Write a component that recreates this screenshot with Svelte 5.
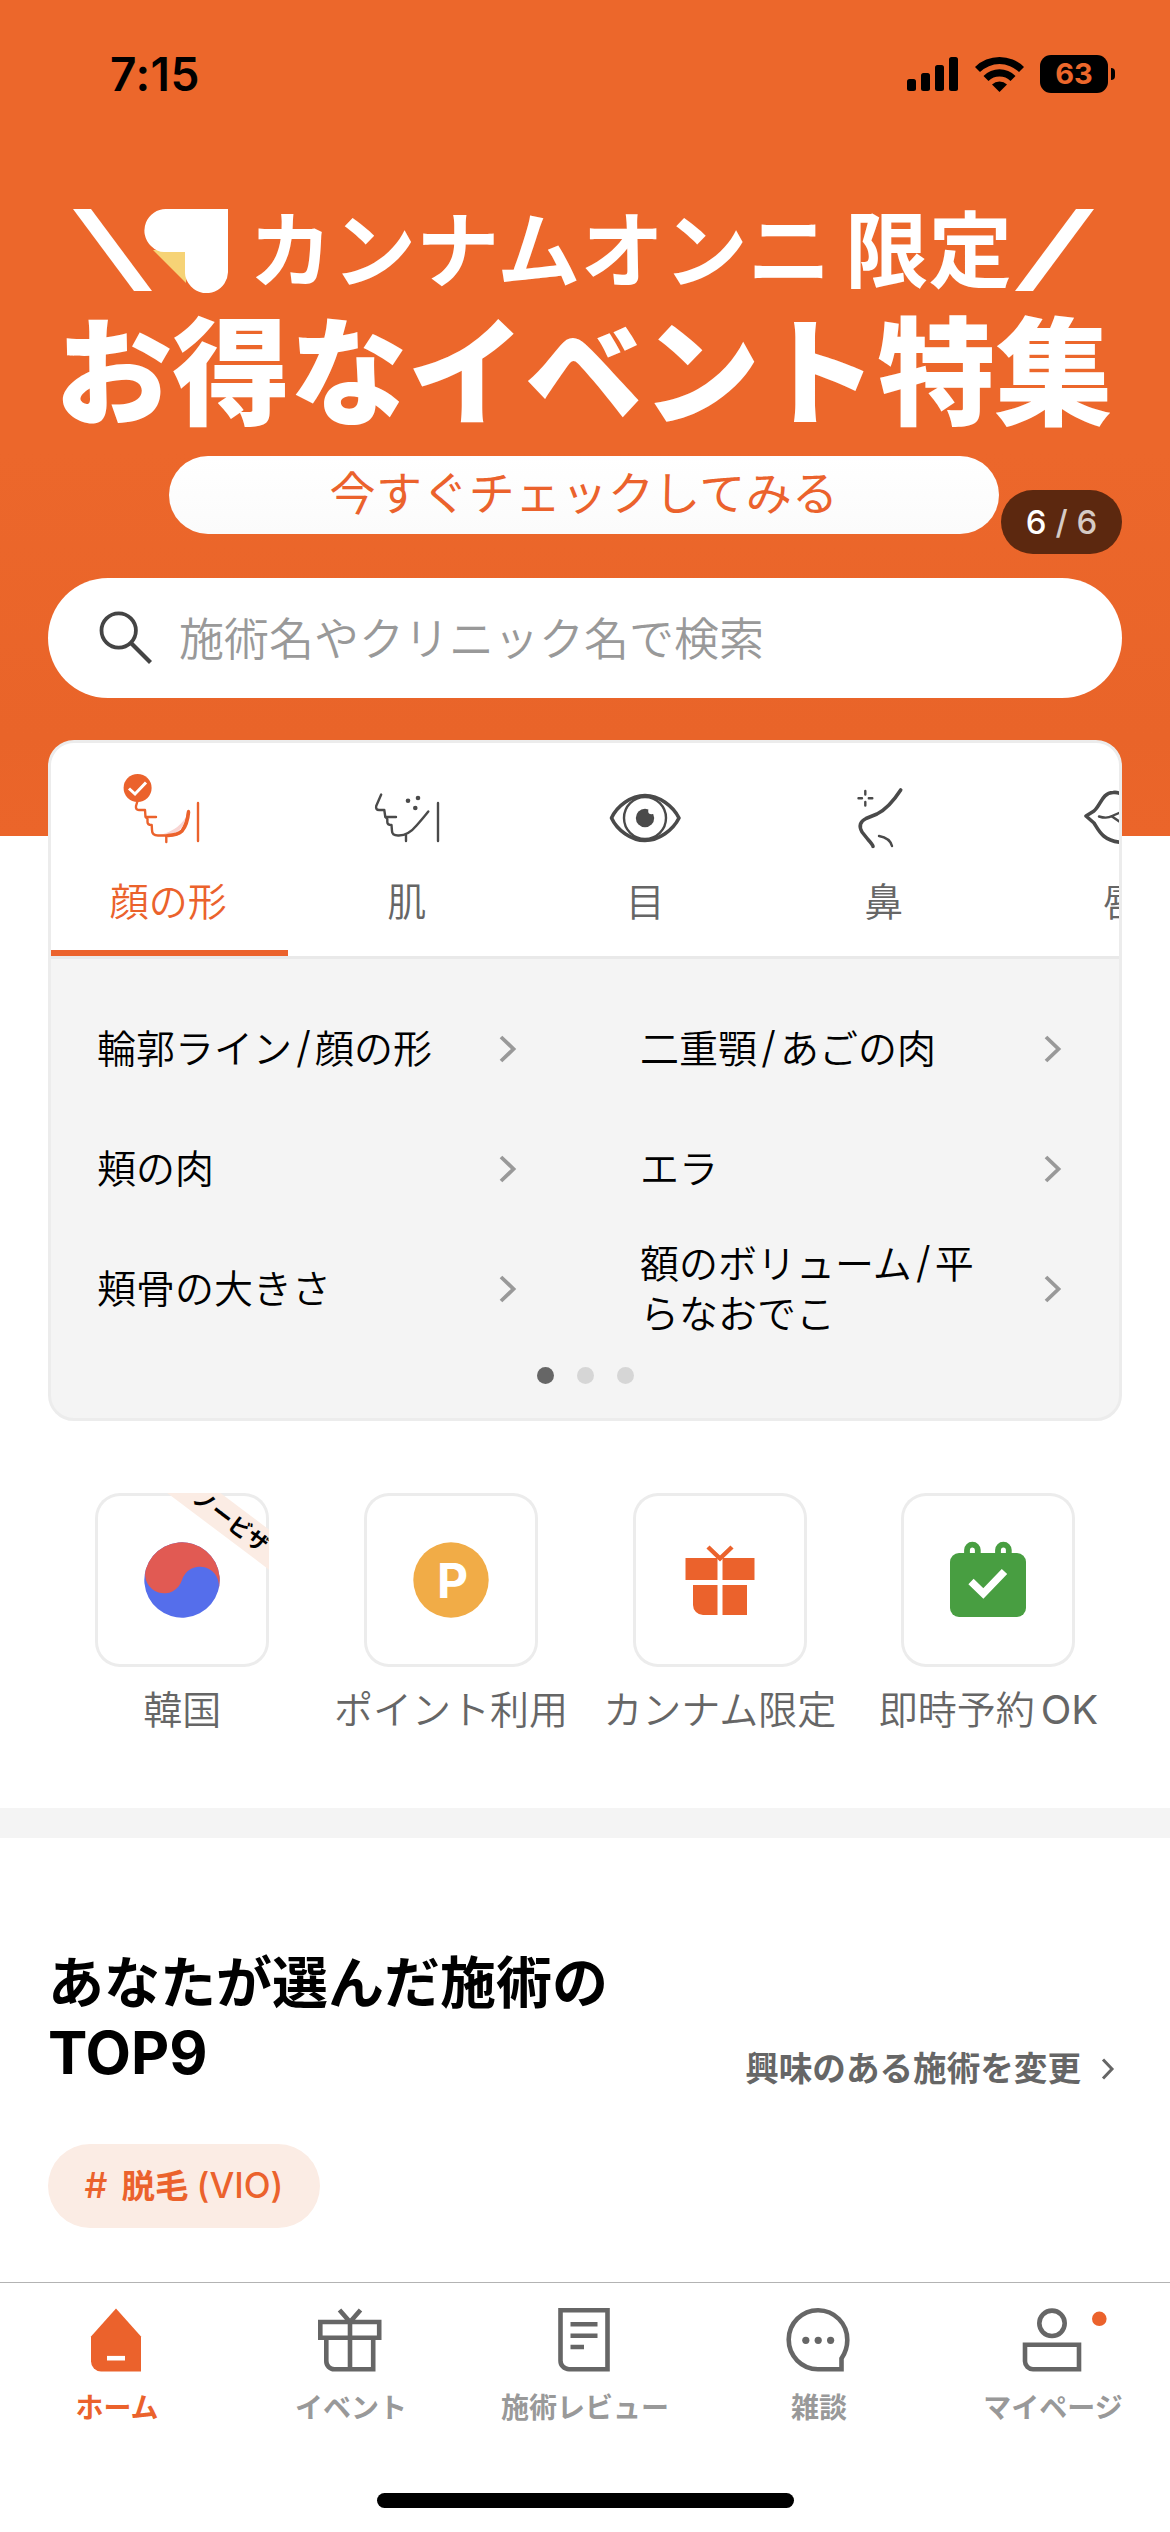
<script>
    const tabs = [
        { id: 'face', label: '顔の形' },
        { id: 'skin', label: '肌' },
        { id: 'eye', label: '目' },
        { id: 'nose', label: '鼻' },
        { id: 'lips', label: '唇' }
    ];

    const parts = [
        '輪郭ライン/顔の形',
        '二重顎/あごの肉',
        '頬の肉',
        'エラ',
        '頬骨の大きさ',
        '額のボリューム/平らなおでこ'
    ];

    const shortcuts = [
        { id: 'korea', label: '韓国', ribbon: 'ノービザ' },
        { id: 'point', label: 'ポイント利用' },
        { id: 'gift', label: 'カンナム限定' },
        { id: 'booking', label: '即時予約', latin: 'OK' }
    ];

    const navItems = [
        { id: 'home', label: 'ホーム' },
        { id: 'event', label: 'イベント' },
        { id: 'review', label: '施術レビュー' },
        { id: 'chat', label: '雑談' },
        { id: 'mypage', label: 'マイページ' }
    ];

    let activeTab = $state('face');
    let activeNav = $state('home');
    let page = $state(0);
</script>

<div class="screen">
    <header class="hero">
        <div class="status">
            <span class="time">7:15</span>
            <div class="status-icons">
                <svg width="51" height="34" viewBox="0 0 51 34">
                    <rect x="0" y="22" width="9" height="12" rx="2.5" />
                    <rect x="14" y="16" width="9" height="18" rx="2.5" />
                    <rect x="28" y="8" width="9" height="26" rx="2.5" />
                    <rect x="42" y="0" width="9" height="34" rx="2.5" />
                </svg>
                <svg class="wifi" width="49" height="36" viewBox="0 0 49 36">
                    <path d="M0 11 A35 35 0 0 1 49 11 L44 16 A28 28 0 0 0 5 16 Z" />
                    <path d="M8.500 20 A22.500 22.500 0 0 1 40.500 20 L35.500 25 A16 16 0 0 0 13.500 25 Z" />
                    <path d="M17 28.500 A11 11 0 0 1 32 28.500 L24.500 36 Z" />
                </svg>
                <span class="battery">63</span>
            </div>
        </div>

        <div class="banner">
            <div class="banner-top">
                <svg width="79" height="82" viewBox="0 0 79 82">
                    <path d="M0 0 H18 L79 82 H61 Z" fill="#fff" />
                </svg>
                <svg class="heart" width="84" height="84" viewBox="0 0 84 84">
                    <path d="M9 41 H42 V74 Z" fill="#f6d376" />
                    <path d="M22 0 H84 V62 A21.500 21.500 0 0 1 47 77.500 Q41 71 41 64 V43 H20 Q13 43 7 37 A21.500 21.500 0 0 1 22 0 Z" fill="#fff" />
                </svg>
                <span class="brand">カンナムオンニ</span>
                <span class="limited">限定</span>
                <svg class="slash" width="79" height="82" viewBox="0 0 79 82">
                    <path d="M61 0 H79 L18 82 H0 Z" fill="#fff" />
                </svg>
            </div>
            <div class="banner-title">お得なイベント特集</div>
            <div class="banner-cta">今すぐチェックしてみる</div>
            <div class="counter">6 <span>/ 6</span></div>
        </div>

        <div class="search">
            <svg width="56" height="58" viewBox="0 0 56 58">
                <circle cx="20.700" cy="21.500" r="17.200" fill="none" stroke="#444" stroke-width="3.800" />
                <path d="M32.500 33.500 L52.500 53.500" stroke="#444" stroke-width="4.200" />
            </svg>
            <span>施術名やクリニック名で検索</span>
        </div>
    </header>

    <section class="card">
        <div class="tabs">
            {#each tabs as tab}
                <button class="tab" class:active={tab.id === activeTab} onclick={() => (activeTab = tab.id)}>
                    <svg width="96" height="84" viewBox="0 0 96 84">
                        {#if tab.id === 'face'}
                            <path d="M68.500 41 Q62 60 38 65.500 Q64 68 68.500 41 Z" fill="#f8d5d3" />
                            <path class="line" d="M17.500 31 L16 36 Q15.500 40 19 40 H25 L25.500 47 H36 M25.500 47 L27.500 49 V52 Q27.500 55 31.700 55 L32 60 Q32 65.500 38 65.500 H46 Q58 65.500 62 61 Q67 54 68.500 41 M46.300 66 V72" />
                            <path class="line bold" d="M48 65.500 Q58 65 62 61 Q67.500 54 68.500 42" />
                            <path class="line" d="M78 33 V71" />
                            <circle cx="17.600" cy="18" r="14" fill="#eb622c" />
                            <path d="M9 18.500 L15 24 L26 12.500" fill="none" stroke="#fff" stroke-width="3" />
                        {:else if tab.id === 'skin'}
                            <path class="line" d="M22.200 24.500 L17.200 36 Q16.500 40 20 40 H25.300 L26.300 47 H37 M26.300 47 L28.300 49 V52 Q28.300 55 32.500 55 L33 61 Q33 65.500 39 65.500 Q49 66 58 55 Q65 47 69.300 41.500 M47 65 V71" />
                            <path class="line" d="M79 33 V71" />
                            <circle cx="49" cy="30.700" r="2.300" />
                            <circle cx="59" cy="28" r="2.300" />
                            <circle cx="56.300" cy="38" r="2.300" />
                        {:else if tab.id === 'eye'}
                            <path class="line bold" d="M14.500 48 C20 36 34 25.500 48 25.500 C62 25.500 76 36 82 48 C76 60 62 70.500 48 70.500 C34 70.500 20 60 14.500 48 Z" />
                            <circle class="line" cx="48" cy="48" r="21" />
                            <circle cx="48" cy="48" r="9.200" />
                            <circle cx="54.500" cy="41" r="3.300" fill="#fff" />
                        {:else if tab.id === 'nose'}
                            <path class="line bold" d="M64.700 20 Q53 38 41 44 L30 48.500 Q21 53 26 62 L32 69.500 Q37 75 37 76.500" />
                            <path class="line" d="M43 66 Q54 68 56 76 M29.300 21 V24.500 M29.300 32 V35.500 M22.500 28.300 H26 M32.800 28.300 H36.300" />
                        {:else}
                            <path class="line bold" d="M47 24 Q44 22 39 22.500 C28 23 27 35 20 41 L12 46 L20 53 C25 61 29 71 48 72.500 C67 71 71 61 76 53 L84 46 L76 41 C69 35 66 23 55 22.500 Q50 22 47 24 Z" />
                            <path class="line" d="M25 46.500 Q33 49 38 46 L46 42.500 M38 46.500 L46 52" />
                        {/if}
                    </svg>
                    <span>{tab.label}</span>
                </button>
            {/each}
        </div>
        <div class="parts">
            {#each parts as part}
                <div class="part">
                    <p>
                        {#each part.split('/') as word, i}{#if i}<span class="sep">/</span>{/if}{word}{/each}
                    </p>
                    <svg width="18" height="28" viewBox="0 0 18 28">
                        <path d="M2 2 L14.500 14 L2 26" fill="none" stroke="#999" stroke-width="3.800" />
                    </svg>
                </div>
            {/each}
        </div>
        <div class="dots">
            {#each [0, 1, 2] as i}
                <i class:on={i === page}></i>
            {/each}
        </div>
    </section>

    <section class="shortcuts">
        {#each shortcuts as item}
            <div class="shortcut">
                <div class="tile">
                    <svg width="84" height="84" viewBox="0 0 84 84">
                        {#if item.id === 'korea'}
                            <g transform="rotate(17 42 42)">
                                <circle cx="42" cy="42" r="37.700" fill="#556eeb" />
                                <path d="M4.300 42 A37.700 37.700 0 0 1 79.700 42 A18.850 18.850 0 0 0 42 42 A18.850 18.850 0 0 1 4.300 42 Z" fill="#e15a53" />
                            </g>
                        {:else if item.id === 'point'}
                            <circle cx="42" cy="42" r="37.700" fill="#f1ac47" />
                            <text x="43.500" y="59.500" text-anchor="middle">P</text>
                        {:else if item.id === 'gift'}
                            <path d="M7.500 20 H39.500 V42 H7.500 Z M44.500 20 H76.500 V42 H44.500 Z M15 47 H39.500 V77 H25 A10 10 0 0 1 15 67 Z M44.500 47 H69 V77 H44.500 Z" fill="#eb622c" />
                            <path d="M30 9 L42 20.500 L54 9" fill="none" stroke="#eb622c" stroke-width="4.500" />
                        {:else}
                            <rect x="4" y="15" width="76" height="64" rx="9" fill="#489e41" />
                            <path d="M21 17 V12 A5.400 5.400 0 0 1 31.800 12 V17 M52 17 V12 A5.400 5.400 0 0 1 62.800 12 V17" fill="none" stroke="#489e41" stroke-width="5.800" />
                            <path d="M25 43.500 L37.300 55.500 L58.500 33.500" fill="none" stroke="#fff" stroke-width="7.500" />
                        {/if}
                    </svg>
                    {#if item.ribbon}
                        <span class="ribbon">{item.ribbon}</span>
                    {/if}
                </div>
                <span class="shortcut-label">{item.label}{#if item.latin}<span class="latin">{item.latin}</span>{/if}</span>
            </div>
        {/each}
    </section>

    <div class="divider"></div>

    <section class="ranking">
        <div class="ranking-head">
            <h2>あなたが選んだ施術の<br /><span>TOP9</span></h2>
            <div class="more">
                <span>興味のある施術を変更</span>
                <svg width="14" height="22" viewBox="0 0 14 22">
                    <path d="M2 1.500 L11 11 L2 20.500" fill="none" stroke="#666" stroke-width="3" />
                </svg>
            </div>
        </div>
        <div class="chip"><span class="hash">#</span>脱毛<span class="paren">(VIO)</span></div>
    </section>

    <nav>
        {#each navItems as item}
            <button class="nav-item" class:current={item.id === activeNav} onclick={() => (activeNav = item.id)}>
                <svg width="110" height="66" viewBox="-1 0 110 66" fill="none" stroke="#666" stroke-width="4.600">
                    {#if item.id === 'home'}
                        <path d="M53 1.500 L78 29.500 V64.500 H38 A10 10 0 0 1 28 54.500 V29.500 Z" fill="#eb622c" stroke="none" />
                        <path d="M44 51.200 H62" stroke="#fff" />
                    {:else if item.id === 'event'}
                        <path d="M23.300 15 H82.200 V30.800 H23.300 Z M29.300 31 V54 A8 8 0 0 0 37.300 62.200 H76.200 V31 M53 14 V62 M42.500 3 L53 15 L63.500 3" />
                    {:else if item.id === 'review'}
                        <path d="M29.500 3.300 H76.500 V62.200 H38 A8.500 8.500 0 0 1 29.500 53.700 Z M39.500 17.300 H66.500 M39.500 28.800 H66.500 M39.500 40 H53" />
                    {:else if item.id === 'chat'}
                        <path d="M53 62.200 A29.300 29.500 0 1 1 82.300 33 Q82.300 43 76.500 51.500 V62.200 Z" />
                        <g fill="#666" stroke="none">
                            <circle cx="40.800" cy="33.300" r="3.600" />
                            <circle cx="53.200" cy="33.300" r="3.600" />
                            <circle cx="65.600" cy="33.300" r="3.600" />
                        </g>
                    {:else}
                        <circle cx="53" cy="16.300" r="12.700" />
                        <path d="M26 37.800 H80 V62.200 H34 A8 8 0 0 1 26 54.200 Z" />
                        <circle cx="100.300" cy="11.800" r="7.300" fill="#eb622c" stroke="none" />
                    {/if}
                </svg>
                <span>{item.label}</span>
            </button>
        {/each}
    </nav>
    <div class="home-indicator"></div>
</div>

<style>
    :global(body) {
        margin: 0;
        background: #fff;
    }

    .screen {
        display: flex;
        flex-direction: column;
        width: 1170px;
        height: 2532px;
        overflow: hidden;
        background: #fff;
        color: #000;
        font-family: Inter, 'Noto Sans CJK JP', sans-serif;
    }

    button {
        padding: 0;
        border: 0;
        background: none;
        font: inherit;
        color: inherit;
    }

    svg {
        display: block;
        flex-shrink: 0;
    }

    .hero {
        flex-shrink: 0;
        box-sizing: border-box;
        height: 836px;
        background: linear-gradient(#ec672b 54%, #e96429 88%, #eb652a);
    }

    .status {
        display: flex;
        justify-content: space-between;
        align-items: center;
        box-sizing: border-box;
        height: 148px;
        padding: 0 55px 0 110px;
    }

    .time {
        font-size: 46px;
        font-weight: 600;
        letter-spacing: 0.5px;
    }

    .status-icons {
        display: flex;
        align-items: center;
    }

    .wifi {
        margin: 0 16px 0 17px;
    }

    .battery {
        position: relative;
        width: 68px;
        height: 38px;
        margin-right: 7px;
        border-radius: 11px;
        background: #000;
        color: #ec672b;
        font-size: 29px;
        font-weight: 700;
        line-height: 38px;
        text-align: center;
    }

    .battery::after {
        content: '';
        position: absolute;
        top: 13px;
        right: -7px;
        width: 4px;
        height: 12px;
        border-radius: 0 5px 5px 0;
        background: #000;
    }

    .banner {
        position: relative;
        height: 430px;
        padding-top: 60px;
        box-sizing: border-box;
        color: #fff;
    }

    .banner-top {
        display: flex;
        height: 86px;
        padding: 1px 0 0 73px;
        font-size: 83.5px;
        font-weight: 700;
        line-height: 84px;
        white-space: nowrap;
    }

    .heart {
        margin: 0 21px 0 -8px;
    }

    .limited {
        margin-left: 14px;
    }

    .slash {
        margin-left: 3px;
    }

    .banner-title {
        margin-top: 18px;
        padding-left: 55px;
        font-size: 117.5px;
        font-weight: 900;
        line-height: 120px;
        white-space: nowrap;
    }

    .banner-cta {
        width: 830px;
        height: 78px;
        margin: 23px 0 0 169px;
        border-radius: 39px;
        background: linear-gradient(#fff, #fbfbfb);
        color: #eb622c;
        font-size: 46px;
        line-height: 74px;
        letter-spacing: 0.4px;
        text-align: center;
    }

    .counter {
        position: absolute;
        right: 48px;
        bottom: 24px;
        width: 121px;
        height: 64px;
        border-radius: 32px;
        background: #5c280f;
        font-size: 33px;
        font-weight: 450;
        line-height: 64px;
        text-align: center;
    }

    .counter span {
        color: #d6cbc5;
    }

    .search {
        display: flex;
        align-items: center;
        gap: 25px;
        box-sizing: border-box;
        height: 120px;
        margin: 0 48px;
        padding-left: 50px;
        border-radius: 60px;
        background: #fff;
        color: #999;
        font-size: 45px;
        font-weight: 350;
    }

    .search span {
        padding-bottom: 4px;
    }

    .card {
        flex-shrink: 0;
        display: flex;
        flex-direction: column;
        box-sizing: border-box;
        height: 681px;
        margin: -96px 48px 0;
        border: 3px solid #ececec;
        border-radius: 26px;
        background: #f4f4f4;
        overflow: hidden;
    }

    .tabs {
        display: flex;
        height: 213px;
        border-bottom: 3px solid #e9e9e9;
        background: #fff;
    }

    .tab {
        display: flex;
        flex: 0 0 238.5px;
        flex-direction: column;
        align-items: center;
        box-sizing: border-box;
        padding-top: 27px;
        color: #666;
        font-size: 39px;
        font-weight: 350;
        line-height: 60px;
        fill: #4a4a4a;
    }

    .tab:first-child {
        margin-left: -2px;
    }

    .tab span {
        margin-top: 18px;
    }

    .tab.active {
        border-bottom: 6px solid #eb622c;
        color: #eb622c;
    }

    .line {
        fill: none;
        stroke: #4a4a4a;
        stroke-width: 2.4;
        stroke-linecap: round;
        stroke-linejoin: round;
    }

    .line.bold {
        stroke-width: 3.6;
    }

    .active .line {
        stroke: #eb622c;
    }

    .parts {
        display: grid;
        grid-template-columns: 543px 1fr;
        grid-auto-rows: 120px;
        padding: 30px 57px 0 46px;
    }

    .part {
        display: flex;
        align-items: center;
        justify-content: space-between;
        font-size: 39px;
        font-weight: 350;
        line-height: 50px;
    }

    .part:nth-child(odd) {
        padding-right: 123px;
    }

    .part p {
        width: 345px;
        margin: 0;
    }

    .sep {
        margin: 0 4px;
        font-size: 43px;
        line-height: 0;
    }

    .dots {
        display: flex;
        justify-content: center;
        gap: 23px;
        margin-top: 18px;
    }

    .dots i {
        width: 17px;
        height: 17px;
        border-radius: 50%;
        background: #d6d6d6;
    }

    .dots i.on {
        background: #666;
    }

    .shortcuts {
        display: grid;
        grid-template-columns: repeat(4, 268.7px);
        flex-shrink: 0;
        height: 315px;
        padding: 72px 0 0 48px;
    }

    .shortcut {
        display: flex;
        flex-direction: column;
        align-items: center;
    }

    .tile {
        position: relative;
        display: flex;
        align-items: center;
        justify-content: center;
        width: 174px;
        height: 174px;
        border-radius: 25px;
        box-shadow: inset 0 0 0 3px #ececec;
        overflow: hidden;
    }

    .tile text {
        fill: #fff;
        font-family: Inter, sans-serif;
        font-size: 48px;
        font-weight: 700;
    }

    .ribbon {
        position: absolute;
        top: 12px;
        left: 56px;
        width: 160px;
        height: 32px;
        background: #fbece4;
        font-size: 22px;
        font-weight: 600;
        line-height: 32px;
        text-align: center;
        transform: rotate(37deg);
    }

    .shortcut-label {
        margin-top: 18px;
        color: #666;
        font-size: 39px;
        font-weight: 350;
        line-height: 50px;
        white-space: nowrap;
    }

    .latin {
        margin-left: 6px;
        font-size: 40px;
        font-weight: 400;
        line-height: 0;
    }

    .divider {
        flex-shrink: 0;
        height: 30px;
        background: #f4f4f4;
    }

    .ranking {
        flex: 1;
        padding: 110px 55px 0 48px;
    }

    .ranking-head {
        display: flex;
        justify-content: space-between;
        align-items: flex-end;
    }

    h2 {
        margin: 0;
        font-size: 56px;
        font-weight: 700;
        line-height: 71px;
    }

    h2 span {
        font-size: 59px;
        line-height: 0;
    }

    .more {
        display: flex;
        align-items: center;
        gap: 20px;
        color: #666;
        font-size: 33.6px;
        font-weight: 600;
        line-height: 43px;
    }

    .chip {
        width: 272px;
        height: 84px;
        margin-top: 54px;
        border-radius: 42px;
        background: #fbece4;
        color: #eb622c;
        font-size: 33.5px;
        font-weight: 600;
        line-height: 84px;
        text-align: center;
    }

    .hash {
        margin-right: 14px;
        font-size: 36px;
        font-weight: 500;
        line-height: 0;
    }

    .paren {
        margin-left: 8px;
        font-size: 35px;
        font-weight: 500;
        line-height: 0;
    }

    nav {
        flex-shrink: 0;
        display: flex;
        height: 210px;
        border-top: 1px solid #b3b3b3;
    }

    .nav-item {
        display: flex;
        flex: 1;
        flex-direction: column;
        align-items: center;
        padding-top: 24px;
        color: #999;
        font-size: 28px;
        font-weight: 600;
        line-height: 36px;
    }

    .nav-item span {
        margin-top: 17px;
    }

    .nav-item.current {
        color: #eb622c;
    }

    .home-indicator {
        flex-shrink: 0;
        width: 417px;
        height: 15px;
        margin: 0 auto 24px;
        border-radius: 8px;
        background: #000;
    }
</style>
